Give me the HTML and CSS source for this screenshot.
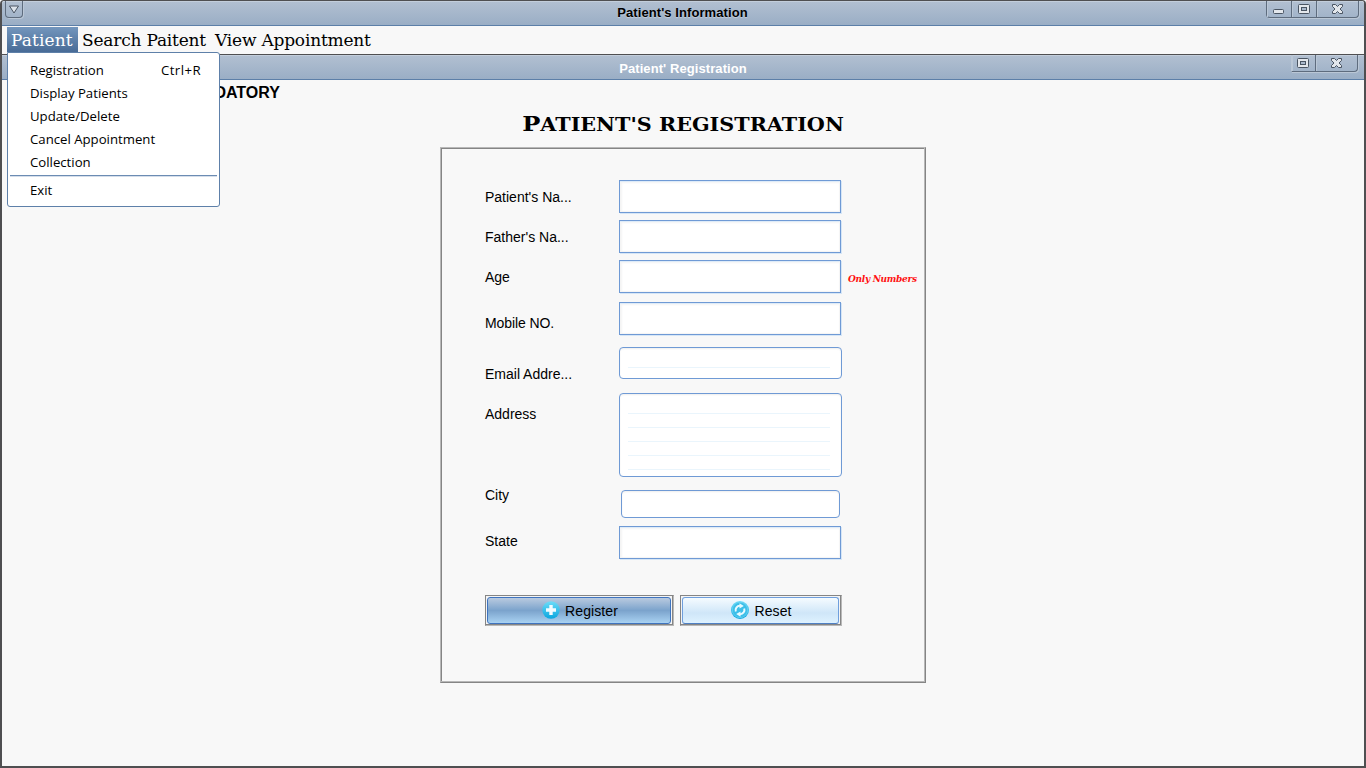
FILE: index.html
```html
<!DOCTYPE html>
<html lang="en">
<head>
<meta charset="utf-8">
<title>Patient's Information</title>
<link rel="stylesheet" href="styles.css">
</head>
<body>
<div class="window">
  <header class="titlebar">
    <span class="sysmenu"><svg width="16" height="16" viewBox="0 0 16 16"><path d="M3.500 5h9l-4.500 7z" fill="#dde3ea" stroke="#4a5563"/></svg></span>
    <span class="caption">Patient's Information</span>
    <div class="controls">
      <span class="ctl ctl-min"><svg width="24" height="16" viewBox="0 0 24 16"><rect x="6.500" y="8.500" width="10" height="4" rx="1" fill="#e3e7ec" stroke="#4a5563"/></svg></span>
      <span class="ctl ctl-max"><svg width="24" height="16" viewBox="0 0 24 16"><rect x="6.500" y="3.500" width="11" height="9" rx="1" fill="#e3e7ec" stroke="#4a5563"/><rect x="9.500" y="6.500" width="5" height="3" fill="#a9b8cb" stroke="#4a5563"/></svg></span>
      <span class="ctl ctl-close"><svg width="41" height="16" viewBox="0 0 41 16"><path d="M15.500 3.500h3l2 2 2-2h3v2l-2.500 2.500 2.500 2.500v2h-3l-2-2-2 2h-3v-2l2.500-2.500-2.500-2.500z" fill="#e3e7ec" stroke="#4a5563"/></svg></span>
    </div>
  </header>
  <nav class="menubar">
    <span class="menu menu-open">Patient</span>
    <span class="menu menu-search">Search Paitent</span>
    <span class="menu menu-view">View Appointment</span>
    <div class="dropdown">
      <div class="item"><span>Registration</span><span class="shortcut">Ctrl+R</span></div>
      <div class="item"><span>Display Patients</span></div>
      <div class="item"><span>Update/Delete</span></div>
      <div class="item"><span>Cancel Appointment</span></div>
      <div class="item"><span>Collection</span></div>
      <div class="separator"></div>
      <div class="item">Exit</div>
    </div>
  </nav>
  <section class="frame">
    <header class="titlebar inner">
      <span class="caption">Patient' Registration</span>
      <div class="controls">
        <span class="ctl ctl-max"><svg width="23" height="16" viewBox="1 0 23 16"><rect x="6.500" y="3.500" width="11" height="9" rx="1" fill="#e3e7ec" stroke="#4a5563"/><rect x="9.500" y="6.500" width="5" height="3" fill="#a9b8cb" stroke="#4a5563"/></svg></span>
        <span class="ctl ctl-close"><svg width="41" height="16" viewBox="0 0 41 16"><path d="M15.500 3.500h3l2 2 2-2h3v2l-2.500 2.500 2.500 2.500v2h-3l-2-2-2 2h-3v-2l2.500-2.500-2.500-2.500z" fill="#e3e7ec" stroke="#4a5563"/></svg></span>
      </div>
    </header>
    <div class="mandatory">MANDATORY</div>
    <h1 class="heading"><span class="initial">P</span>ATIENT'S REGISTRATION</h1>
    <form class="panel">
      <div class="row r-name"><label>Patient's Na...</label><div class="field"></div></div>
      <div class="row r-father"><label>Father's Na...</label><div class="field"></div></div>
      <div class="row r-age"><label>Age</label><div class="field"></div><span class="hint">Only Numbers</span></div>
      <div class="row r-mobile"><label>Mobile NO.</label><div class="field"></div></div>
      <div class="row r-email"><label>Email Addre...</label><div class="field area"></div></div>
      <div class="row r-address"><label>Address</label><div class="field area tall"></div></div>
      <div class="row r-city"><label>City</label><div class="field round"></div></div>
      <div class="row r-state"><label>State</label><div class="field"></div></div>
      <div class="actions">
        <div class="btn register"><div class="face">
          <svg width="18" height="18" viewBox="0 0 18 18"><defs><linearGradient id="cyan" x1="0" y1="0" x2="0" y2="1"><stop offset="0" stop-color="#6ddcf8"/><stop offset="1" stop-color="#09a6df"/></linearGradient></defs><circle cx="9" cy="9" r="8.700" fill="url(#cyan)"/><path d="M7.300 4h3.400v3.300H14v3.400h-3.300V14H7.300v-3.300H4V7.300h3.300z" fill="#f2fbff"/></svg>
          <span>Register</span></div></div>
        <div class="btn reset"><div class="face">
          <svg width="18" height="18" viewBox="0 0 18 18"><circle cx="9" cy="9" r="9" fill="url(#cyan)"/><circle cx="9" cy="9" r="7.700" fill="#3cbfe9" stroke="#74d4f2" stroke-width=".7"/><path d="M4.800 10.500A4.300 4.300 0 0 1 9 4.800M13.200 7.500A4.300 4.300 0 0 1 9 13.200" fill="none" stroke="#e9faff" stroke-width="2"/><path d="M8.500 2.300l4.300 2.700-4.300 2.600zM9.500 15.700L5.200 13l4.300-2.600z" fill="#e9faff"/></svg>
          <span>Reset</span></div></div>
      </div>
    </form>
  </section>
</div>
</body>
</html>
```
FILE: styles.css
```css
* { box-sizing: border-box; }
body { margin: 0; background: #f8f8f8; font-family: "Liberation Sans", Arial, sans-serif; color: #000; }
svg { display: block; flex: none; }
.window { width: 1366px; height: 768px; display: flex; flex-direction: column; overflow: hidden; background: #f8f8f8; border: 2px solid #4f4f51; border-top-width: 1px; border-radius: 4px 4px 0 0; }
.titlebar { height: 25px; flex: none; display: grid; grid-template-columns: 98px 1fr 98px; background: linear-gradient(#b1bfd1, #9aaec5); border-top: 1px solid #c3cedb; border-bottom: 1px solid #5c7fa8; }
.caption { grid-column: 2; text-align: center; font-size: 13px; font-weight: bold; line-height: 21px; letter-spacing: .08px; padding-right: 1px; text-shadow: 0 1px 1px #c5d0de; }
.sysmenu { grid-column: 1; width: 18px; height: 17px; margin: -1px 0 0 3px; border: 1px solid #5e6c7e; border-top: 0; border-radius: 0 0 4px 4px; box-shadow: 1px 1px #bac7d6; }
.controls { grid-column: 3; height: 17px; display: flex; justify-self: end; margin: -1px 5px 0 0; border: 1px solid #5e6c7e; border-top: 0; border-radius: 0 0 4px 4px; box-shadow: 1px 1px #bac7d6; }
.ctl { box-shadow: inset 1px 0 #bac7d6; }
.ctl + .ctl { border-left: 1px solid #5e6c7e; }
.menubar { position: relative; height: 28px; flex: none; display: flex; padding: 1px 0 2px 5px; font-family: "DejaVu Serif", serif; font-size: 17px; line-height: 26px; white-space: nowrap; z-index: 2; }
.menu-open { width: 71px; height: 25px; padding-left: 4px; color: #fff; background: linear-gradient(#7396bd, #486b96); letter-spacing: .1px; }
.menu-search { width: 133px; padding-left: 4px; letter-spacing: -.2px; }
.menu-view { padding-left: 4px; letter-spacing: -.2px; }
.dropdown { position: absolute; left: 5px; top: 26px; width: 213px; height: 155px; padding: 6px 0 0; background: #fff; border: 1px solid #5e80a9; border-radius: 0 3px 3px 3px; font: 13.2px/23px "Open Sans", "Noto Sans", sans-serif; }
.item { height: 23px; display: flex; justify-content: space-between; padding: 0 18px 0 22px; }
.shortcut { letter-spacing: .45px; }
.separator { height: 1px; margin: 1px 2px 3px; background: #6c8cb3; box-shadow: 0 1px #d5deea; }
.frame { flex: 1; border-top: 1px solid #4f4f51; }
.inner .caption { color: #fff; text-shadow: none; line-height: 25px; padding-right: 0; }
.inner .controls { margin-right: 6px; border-left-color: #bac7d6; border-radius: 0 0 4px 0; }
.mandatory { height: 24px; padding-left: 176px; font-size: 16px; font-weight: bold; line-height: 26px; }
.heading { margin: 0; height: 43px; line-height: 39px; text-align: center; font-family: "DejaVu Serif", serif; font-size: 18px; font-weight: bold; transform: scaleX(1.15); }
.initial { font-size: 21px; }
.panel { width: 486px; height: 536px; margin-left: 438px; padding: 32px 0 0 44px; border: 1px solid; border-color: #b8b8b8 #858585 #858585 #b8b8b8; box-shadow: inset -1px -1px #b8b8b8, inset 1px 1px #858585; font-size: 14px; }
.row { display: flex; height: 40px; line-height: 18px; }
.row label { width: 134px; padding-top: 8px; }
.field { width: 222px; height: 33px; background: #fff; border: 1px solid #6f9ad5; box-shadow: 1px 1px #d6e6f6, inset 0 1px #deebf8, inset 2px 2px 2px #f4f4f4, inset -1px -1px 1px #f4f4f4; }
.area, .round { border-radius: 4px; box-shadow: inset 0 1px 2px #eee; }
.area { width: 223px; height: 32px; padding: 19px 11px 0 8px; }
.area::before { content: ""; display: block; height: 1px; background: #eaf5fc; }
.tall { height: 84px; }
.tall::before { height: 57px; background: repeating-linear-gradient(#eaf5fc 0 1px, transparent 1px 14px); }
.r-age { height: 42px; }
.r-mobile { height: 45px; }
.r-mobile label, .r-address label { padding-top: 12px; }
.r-mobile label { letter-spacing: -.1px; }
.r-email { height: 46px; }
.r-email label { padding-top: 18px; }
.r-address { height: 93px; }
.r-city label { padding-top: 0; }
.round { width: 219px; height: 28px; margin: 4px 0 0 2px; }
.r-state { height: 69px; }
.r-state label { padding-top: 6px; }
.hint { padding: 10px 0 0 7px; color: #f11; font: italic bold 9px/18px "DejaVu Serif", serif; letter-spacing: -.3px; white-space: nowrap; }
.actions { display: flex; gap: 6px; }
.btn { width: 189px; height: 31px; padding: 1px; background: #f4f4f4; border: 1px solid; border-color: #858585 #b9b9b9 #b9b9b9 #858585; box-shadow: inset -1px -1px #858585; }
.reset { width: 162px; }
.face { height: 27px; width: calc(100% - 1px); display: flex; align-items: center; justify-content: center; gap: 5px; padding-left: 2px; border: 1px solid #3f74bf; border-radius: 3px; background: linear-gradient(#b9cadf, #7ba3cc 50%, #a9d2f2); }
.face svg { margin-bottom: 2px; }
.face span { letter-spacing: .1px; }
.reset .face { background: linear-gradient(#f5fbff, #cfe6f8 60%, #def2ff); border-color: #6f9fdd #6f9fdd #4f80c4; }
```
